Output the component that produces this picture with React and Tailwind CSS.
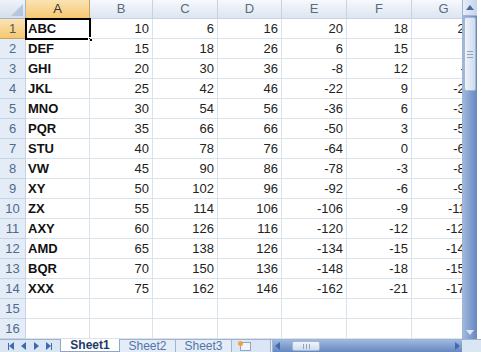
import React from 'react';

const names = ['ABC', 'DEF', 'GHI', 'JKL', 'MNO', 'PQR', 'STU', 'VW', 'XY', 'ZX', 'AXY', 'AMD', 'BQR', 'XXX'];
const cols = ['A', 'B', 'C', 'D', 'E', 'F', 'G'];

const rows = names.map((n, i) => [
  n,
  10 + 5 * i,
  6 + 12 * i,
  16 + 10 * i,
  20 - 14 * i,
  18 - 3 * i,
  24 - 15 * i,
]);

const font = { fontFamily: '"Liberation Sans", Arial, sans-serif' };

const Tri = ({ dir, className = '' }) => {
  const d = {
    up: 'M0 5 L4 0 L8 5 Z',
    down: 'M0 0 L8 0 L4 5 Z',
    left: 'M5 0 L5 8 L0 4 Z',
    right: 'M0 0 L5 4 L0 8 Z',
  }[dir];
  const w = dir === 'up' || dir === 'down' ? 8 : 5;
  const h = dir === 'up' || dir === 'down' ? 5 : 8;
  return (
    <svg width={w} height={h} viewBox={`0 0 ${w} ${h}`} className={className}>
      <path d={d} fill="currentColor" />
    </svg>
  );
};

export default function App() {
  return (
    <div className="w-[481px] h-[352px] flex flex-col overflow-hidden bg-white text-[13px]" style={font}>
      <div className="flex flex-1 min-h-0">
        {/* Grid */}
        <div className="w-[462px] overflow-hidden">
          <div className="grid w-[476px] grid-cols-[26px_64px_63px_65px_64px_65px_65px_64px] grid-rows-[19px_repeat(16,20px)]">
            {/* corner */}
            <div className="relative bg-gradient-to-b from-[#eef3fa] to-[#d5deeb] border-r border-b border-[#9eb6ce]">
              <div className="absolute right-[2px] bottom-[2px] w-0 h-0 border-l-[12px] border-l-transparent border-b-[12px] border-b-[#b6c6dd]" />
            </div>
            {cols.map(c => (
              <div
                key={c}
                className={
                  'flex items-center justify-center border-r border-b text-[13px] ' +
                  (c === 'A'
                    ? 'bg-gradient-to-b from-[#fbe3b3] to-[#f6c76f] border-[#c2a467] text-[#333]'
                    : 'bg-gradient-to-b from-[#f6f9fd] to-[#dde5f0] border-[#c5d3e5] text-[#5a6a80]')
                }
              >
                {c}
              </div>
            ))}
            {Array.from({ length: 16 }).map((_, r) => {
              const data = rows[r];
              return (
                <React.Fragment key={r}>
                  <div
                    className={
                      'flex items-center justify-center border-r border-b ' +
                      (r === 0
                        ? 'bg-gradient-to-b from-[#fbe3b3] to-[#f6c76f] border-[#c2a467] text-[#555]'
                        : 'bg-[#e4ecf7] border-[#c5d3e5] text-[#4f6a8a]')
                    }
                  >
                    {r + 1}
                  </div>
                  {cols.map((c, ci) => (
                    <div
                      key={c}
                      className={
                        'relative flex items-center border-r border-b border-[#dae2ec] whitespace-nowrap ' +
                        (ci === 0 ? 'justify-start pl-[2px] font-bold text-[#111]' : 'justify-end pr-[3px] text-[#222]')
                      }
                    >
                      {data ? data[ci] : ''}
                      {r === 0 && ci === 0 && (
                        <>
                          <div className="absolute -left-px -top-px right-[-2px] bottom-[-2px] border-2 border-black pointer-events-none" />
                          <div className="absolute right-[-4px] bottom-[-4px] w-[5px] h-[5px] bg-black border border-white" />
                        </>
                      )}
                    </div>
                  ))}
                </React.Fragment>
              );
            })}
          </div>
        </div>
        {/* Vertical scrollbar */}
        <div className="w-[15px] flex flex-col border-l border-[#9fb4d1] bg-gradient-to-r from-[#9fb8de] to-[#6688c0]">
          <div className="h-[16px] flex items-center justify-center bg-gradient-to-r from-[#e6eef9] to-[#c4d4ea] border-b border-[#9fb4d1] text-[#4b6a9a]">
            <Tri dir="up" />
          </div>
          <div className="h-[74px] mx-px mt-px flex flex-col items-center justify-center gap-[2px] rounded-[2px] bg-gradient-to-r from-[#eef3fa] to-[#cfdcee] border border-[#a3b8d6]">
            <div className="w-[6px] h-px bg-[#8ea5c6]" />
            <div className="w-[6px] h-px bg-[#8ea5c6]" />
            <div className="w-[6px] h-px bg-[#8ea5c6]" />
          </div>
          <div className="flex-1" />
          <div className="h-[14px] flex items-center justify-center text-[#dbe5f3]">
            <Tri dir="down" />
          </div>
        </div>
        <div className="w-[4px] bg-white" />
      </div>
      {/* Tab bar */}
      <div className="h-[13px] flex items-stretch bg-[#dbe6f4] border-t border-[#9fb4d1] text-[12px] leading-none">
        <div className="w-[60px] flex items-center justify-around px-[4px] text-[#3e6bb0]">
          <div className="flex items-center"><div className="w-px h-[7px] bg-current" /><Tri dir="left" /></div>
          <Tri dir="left" />
          <Tri dir="right" />
          <div className="flex items-center"><Tri dir="right" /><div className="w-px h-[7px] bg-current" /></div>
        </div>
        <div className="w-[60px] -mt-px flex items-center justify-center bg-white border-x border-b border-[#8fa6c8] font-bold text-[#1d3a66]">
          Sheet1
        </div>
        <div className="w-[56px] flex items-center justify-center border-r border-[#9fb4d1] bg-[#e3ecf7] text-[#5375a8]">
          Sheet2
        </div>
        <div className="w-[56px] flex items-center justify-center border-r border-[#9fb4d1] bg-[#e3ecf7] text-[#5375a8]">
          Sheet3
        </div>
        <div className="w-[26px] flex items-center justify-center">
          <div className="w-[11px] h-[9px] bg-[#f1f4f9] border border-[#8fa6c8] relative">
            <div className="absolute -left-[3px] -top-[2px] w-[5px] h-[5px] rounded-full bg-[#f2a23a]" />
          </div>
        </div>
        <div className="flex-1 flex items-stretch">
          <div className="w-[12px]" />
          <div className="w-[3px] border-x border-[#9fb4d1] bg-[#e8eef7]" />
          <div className="flex-1 flex items-center bg-gradient-to-b from-[#9fb8de] to-[#6688c0] px-[2px] gap-[4px]">
            <Tri dir="left" className="text-[#3e6bb0]" />
            <div className="w-[28px] h-[10px] ml-[8px] flex items-center justify-center gap-[2px] rounded-[2px] bg-gradient-to-b from-[#f1f5fb] to-[#cfdcee] border border-[#a3b8d6]">
              <div className="w-px h-[5px] bg-[#8ea5c6]" />
              <div className="w-px h-[5px] bg-[#8ea5c6]" />
              <div className="w-px h-[5px] bg-[#8ea5c6]" />
            </div>
            <div className="flex-1" />
            <Tri dir="right" className="text-[#3e6bb0]" />
          </div>
          <div className="w-[19px] bg-[#dbe6f4]" />
        </div>
      </div>
    </div>
  );
}
